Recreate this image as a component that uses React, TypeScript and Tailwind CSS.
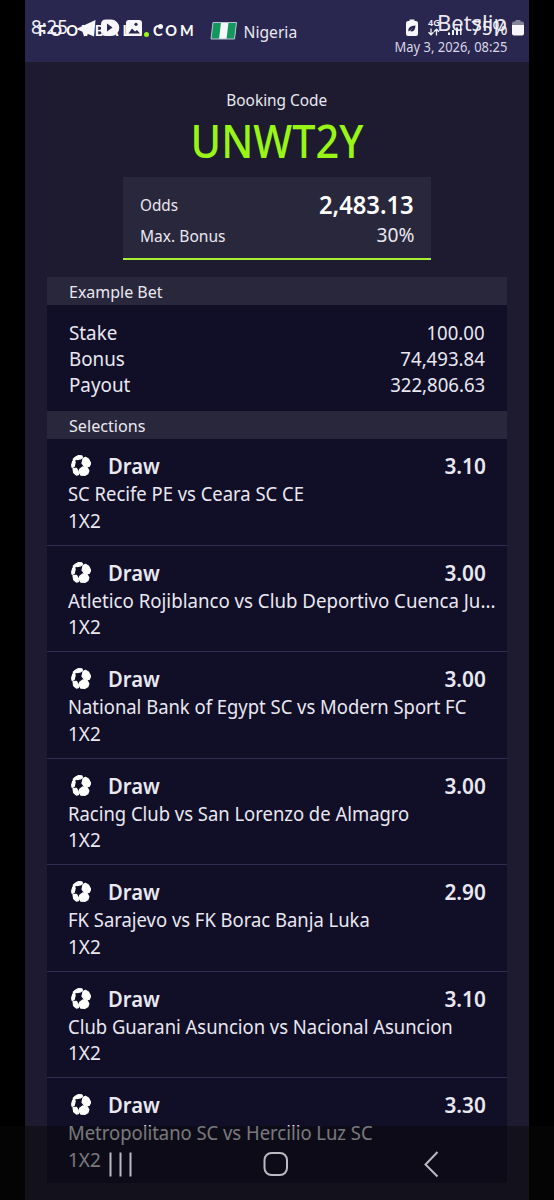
const selections = [
  { match: "SC Recife PE vs Ceara SC CE", odds: "3.10" },
  { match: "Atletico Rojiblanco vs Club Deportivo Cuenca Ju...", odds: "3.00" },
  { match: "National Bank of Egypt SC vs Modern Sport FC", odds: "3.00" },
  { match: "Racing Club vs San Lorenzo de Almagro", odds: "3.00" },
  { match: "FK Sarajevo vs FK Borac Banja Luka", odds: "2.90" },
  { match: "Club Guarani Asuncion vs Nacional Asuncion", odds: "3.10" },
  { match: "Metropolitano SC vs Hercilio Luz SC", odds: "3.30" },
]

const example = [
  { label: "Stake", value: "100.00" },
  { label: "Bonus", value: "74,493.84" },
  { label: "Payout", value: "322,806.63" },
]

function BallIcon() {
  return (
    <svg viewBox="0 0 61 63" className="h-[21px] w-[20.5px]" fill="#fff" stroke="#fff" strokeWidth="4" strokeLinejoin="round">
      <path d="m14 6 8-4 10 .5 2 4-5 5-12 2Z" />
      <path d="m36 11 7-4 9 5 7 13-5 9-12 2-9-11Z" />
      <path d="m26 43 9-7 13 2 5 9-3 9-9 5-12-1-5-9Z" />
      <path d="m6 41 10-1 5 9 1 10-6 1-8-7Z" />
      <path d="m2 30 3-11 5-3 2 6-3 13-6 2Z" />
      <path d="m7 12 6-5 2 4-5 6-3-1Z" />
    </svg>
  )
}

function Flag() {
  return (
    <svg viewBox="0 0 28 20" className="h-5 w-7">
      <path d="M3 1.500H26.500L24.500 18H1Z" fill="#f4f6f8" />
      <path d="M3 1.500H11L9 18H1Z" fill="#12985c" />
      <path d="M18.500 1.500H26.500L24.500 18H16.500Z" fill="#12985c" />
      <path d="M3 1.500H26.500L24.500 18H1Z" fill="none" stroke="#b9bfd4" />
    </svg>
  )
}

function StatusBar() {
  return (
    <div className="absolute inset-x-0 top-0 h-11 text-[#f1f0f8]">
      <span className="absolute left-[31px] top-[13px] origin-left scale-x-[0.93] text-[20px] leading-7">8:25</span>
      <svg viewBox="0 0 70 18" className="absolute left-[76px] top-[19px] h-[18px] w-[70px]" fill="#f7f7fb">
        <path d="M0 10 19.500 1 18 17.500 12 15 8 17.500 6.500 12.800Z" />
        <path d="M30 .5h5a8.300 8.300 0 0 1 0 16.600h-5q-5 0-5-5V5.500q0-5 5-5Z" />
        <path d="M31 4.500 36.500 8.500 31 12.500Z" fill="#29264f" />
        <rect x="50" y="1" width="16" height="16" rx="3" />
        <circle cx="60" cy="5.300" r="1.600" fill="#29264f" />
        <path d="m52.500 14.500 3.500-5 3 3 2-1.500 3 3.500Z" fill="#29264f" />
      </svg>
      <span className="absolute left-[158px] top-[24px] h-[5px] w-[5px] rounded-full bg-[#f7f7fb]" />
      <svg viewBox="0 0 12 17" className="absolute left-[406px] top-[19px] h-[17px] w-3">
        <path d="M3.500 2V0.500h5V2H10q2 0 2 2v11q0 2-2 2H2q-2 0-2-2V4q0-2 2-2Z" fill="#f7f7fb" />
        <path d="M2.500 12.500c-.8-4 2-5.500 7-6-.2 4.500-2 7-5.500 5.500l3.200-3-4.700 3.500Z" fill="#29264f" />
      </svg>
      <span className="absolute left-[428px] top-[18px] origin-left text-[9px] font-semibold leading-[10px]">4G</span>
      <svg viewBox="0 0 13 8" className="absolute left-[427px] top-[28px] h-2 w-[13px]" fill="none" stroke="#efeff5" strokeWidth="1.300">
        <path d="M4 .5v6M1.500 4.300 4 6.800l2.500-2.500M9.500 7.500v-6M7 3.700l2.500-2.500L12 3.700" />
      </svg>
      <svg viewBox="0 0 14 14" className="absolute left-[448px] top-[21px] h-3.5 w-3.5" fill="#efeff5">
        <path d="M0 11.500h2V14H0zM4 9h2v5H4zM8 6.500h2V14H8zM12 3h1.500v11H12z" />
      </svg>
      <span className="absolute left-[471px] top-[14px] origin-left scale-x-[0.93] text-[20px] leading-7">75%</span>
      <svg viewBox="0 0 12 16" className="absolute left-[512px] top-[20px] h-4 w-3">
        <path d="M3.500 1.500V0h5v1.500H10q2 0 2 2V5H0V3.500q0-2 2-2Z" fill="#85829c" />
        <path d="M0 5h12v8.500q0 2-2 2H2q-2 0-2-2Z" fill="#f7f7fb" />
      </svg>
    </div>
  )
}

function NavBar() {
  return (
    <div className="absolute inset-x-0 bottom-0 h-[74px] bg-[#080808]/50">
      <svg viewBox="0 0 554 74" className="h-[74px] w-[554px]" fill="none" stroke="#bbb9c2" strokeWidth="2">
        <path d="M110.500 26.500v24M120.500 26.500v24M130.500 26.500v24" />
        <rect x="264.500" y="27" width="22.500" height="22" rx="7" />
        <path d="m437.500 26-12 12.500 12 12" />
      </svg>
    </div>
  )
}

export default function App() {
  return (
    <div className="relative h-[1200px] w-[554px] overflow-hidden bg-black px-[25px] font-['Noto_Sans','Open_Sans',sans-serif] text-[#e9e8f1]">
      <div className="h-full bg-[#1e1b30]">
        <header className="flex h-[62px] justify-between bg-[#29264f]">
          <div className="flex items-center">
            <div className="flex w-[183px] items-center pl-[13px] font-['Lato',sans-serif] text-[14.500px] font-bold leading-5 text-white">
              <span className="w-[106px] tracking-[4.200px]">FOOTBALL</span>
              <span className="mt-[6px] h-[5px] w-[5px] shrink-0 rounded-full bg-[#98f516]" />
              <span className="pl-[4px] tracking-[3px]">COM</span>
            </div>
            <div className="flex items-center pl-0.5">
              <Flag />
              <span className="origin-left scale-x-[0.92] pl-[6px] pt-px text-[17px] leading-6">Nigeria</span>
            </div>
          </div>
          <div className="flex flex-col items-end pr-[22px] pt-[8px]">
            <span className="origin-right text-[22px] leading-7">Betslip</span>
            <span className="origin-right scale-x-[0.893] text-[14.500px] leading-5 text-[#d8d7e8]">May 3, 2026, 08:25</span>
          </div>
        </header>

        <section className="flex flex-col items-center pt-[26px]">
          <div className="scale-x-[0.905] text-[17px] leading-6">Booking Code</div>
          <div className="scale-x-[0.9] text-[46px] font-medium leading-[56px] text-[#98f516]">UNWT2Y</div>
          <div className="mt-[9px] h-[83px] w-[308px] border-b-2 border-[#a5ef35] bg-[#29273b] px-[17px] pt-[13px]">
            <div className="flex h-[30px] items-center justify-between">
              <span className="origin-left scale-x-[0.9] text-[17px]">Odds</span>
              <span className="origin-right scale-x-[0.95] text-[25px] font-semibold text-white">2,483.13</span>
            </div>
            <div className="flex h-[31px] items-center justify-between">
              <span className="origin-left scale-x-[0.915] text-[17px]">Max. Bonus</span>
              <span className="relative -top-px origin-right scale-x-[0.96] text-[20px]">30%</span>
            </div>
          </div>
        </section>

        <main className="mx-[22px] mt-[17px] bg-[#110e27]">
          <h2 className="h-7 bg-[#29273b] pl-[22px] text-[17px] leading-[29px]">
            <span className="inline-block origin-left scale-x-[0.94]">Example Bet</span>
          </h2>
          <div className="h-[106px] px-[22px] pt-[15px] text-[20px] leading-[26px]">
            {example.map((row) => (
              <div key={row.label} className="flex justify-between">
                <span className="origin-left scale-x-[0.94]">{row.label}</span>
                <span className="origin-right scale-x-[0.93]">{row.value}</span>
              </div>
            ))}
          </div>
          <h2 className="h-7 bg-[#29273b] pl-[22px] text-[17px] leading-[29px]">
            <span className="inline-block origin-left scale-x-[0.95]">Selections</span>
          </h2>
          {selections.map((item, i) => (
            <div key={item.match} className="h-[106.500px] border-b-[1.500px] border-[#302d50] px-[21px] pt-[11px] last:h-[105px] last:border-b-0">
              <div className="flex h-[31px] items-center text-[22px] font-semibold leading-[31px]">
                <div className="w-10 pl-[2.500px]">
                  <BallIcon />
                </div>
                <span className="origin-left scale-x-[0.92]">Draw</span>
                <span className="ml-auto origin-right scale-x-[0.945]">{item.odds}</span>
              </div>
              <div className={`w-max origin-left whitespace-nowrap text-[19.500px] leading-[26.500px] ${i === 1 ? "scale-x-[0.957]" : "scale-x-[0.945]"}`}>
                {item.match}
              </div>
              <div className="origin-left scale-x-[0.97] text-[19.500px] leading-[26.500px]">1X2</div>
            </div>
          ))}
        </main>
      </div>
      <StatusBar />
      <NavBar />
    </div>
  )
}
